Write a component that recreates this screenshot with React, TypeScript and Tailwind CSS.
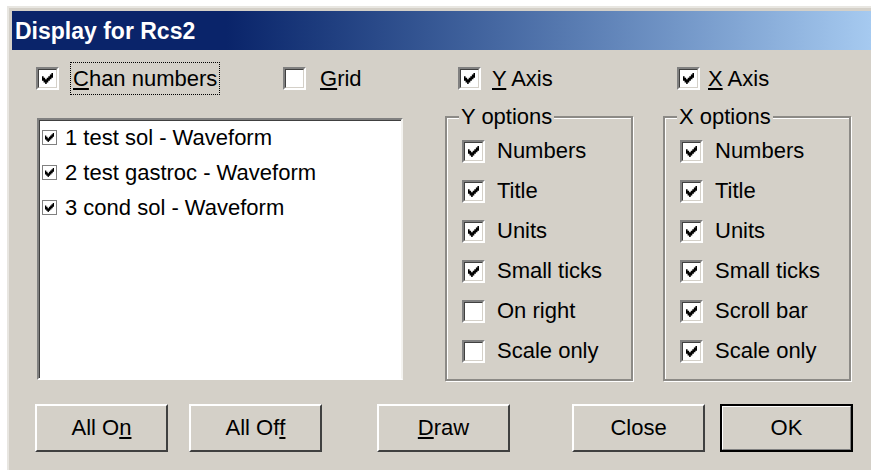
import React from 'react';

// Classic 7x7 pixel tick used by the old-style check boxes
function Tick({ className }: { className: string }) {
  return (
    <svg viewBox="0 0 7 7" className={className} fill="#000">
      <path d="M0 2H1V3H2V4H3V3H4V2H5V1H6V0H7V3H6V4H5V5H4V6H3V7H2V6H1V5H0Z" />
    </svg>
  );
}

function Box({ checked = true }: { checked?: boolean }) {
  return (
    <span className="flex h-[23px] w-[23px] shrink-0 border-2 border-t-[#808080] border-l-[#808080] border-b-white border-r-white">
      <span className="flex flex-1 items-center justify-center border border-t-[#404040] border-l-[#404040] border-b-[#d4d0c8] border-r-[#d4d0c8] bg-white">
        {checked && <Tick className="h-[11px] w-[11px]" />}
      </span>
    </span>
  );
}

function SmallBox() {
  return (
    <span className="flex h-[15px] w-[15px] shrink-0 items-center justify-center border border-[#808080] bg-white">
      <Tick className="h-[9px] w-[9px]" />
    </span>
  );
}

function Option({ label, checked = true }: { label: string; checked?: boolean }) {
  return (
    <div className="flex h-[40px] items-center gap-[12px]">
      <Box checked={checked} />
      <span>{label}</span>
    </div>
  );
}

function Group({ title, children }: { title: string; children: React.ReactNode }) {
  return (
    <fieldset className="h-[277px] w-[188px] border-2 border-[#8c8a86] shadow-[inset_1px_1px_0_#fff,1px_1px_0_#fff]">
      <legend className="ml-[12px] bg-[#d4d0c8] px-[2px] leading-[26px]">{title}</legend>
      <div className="pl-[15px] pt-[1px]">{children}</div>
    </fieldset>
  );
}

function Button({ children, className = '' }: { children: React.ReactNode; className?: string }) {
  return (
    <div
      className={`flex h-[48px] w-[133px] items-center justify-center border-2 border-t-white border-l-white border-b-[#404040] border-r-[#404040] ${className}`}
    >
      {children}
    </div>
  );
}

const traces = ['1 test sol - Waveform', '2 test gastroc - Waveform', '3 cond sol - Waveform'];

export default function App() {
  return (
    <div className="h-[470px] w-[871px] overflow-hidden bg-white pl-[7px] pt-[6px] font-['Liberation_Sans',Arial,sans-serif] text-[22px] leading-[26px] text-black">
      <div className="h-full border-l-2 border-t-2 border-[#e8e6e1] bg-[#d4d0c8] pl-[3px] pt-[3px]">
        {/* Caption */}
        <div className="flex h-[39px] items-center bg-linear-to-r from-[#0a246a] from-25% to-[#a6caf0] pl-[3px] text-[23px] font-bold text-white">
          Display for Rcs2
        </div>

        {/* Top row of toggles */}
        <div className="mt-[12px] flex h-[33px] items-center pl-[24px]">
          <div className="flex w-[247px] items-center">
            <Box />
            <span className="ml-[11px] flex h-[33px] items-center border border-dotted border-black px-[2px]">
              <u className="underline-offset-2">C</u>han numbers
            </span>
          </div>
          <div className="flex w-[175px] items-center">
            <Box checked={false} />
            <span className="ml-[14px]">
              <u className="underline-offset-2">G</u>rid
            </span>
          </div>
          <div className="flex w-[219px] items-center">
            <Box />
            <span className="ml-[11px]">
              <u className="underline-offset-2">Y</u> Axis
            </span>
          </div>
          <div className="flex items-center">
            <Box />
            <span className="ml-[8px]">
              <u className="underline-offset-2">X</u> Axis
            </span>
          </div>
        </div>

        {/* Trace list and axis groups */}
        <div className="mt-[9px] flex items-start pl-[25px]">
          <div className="mt-[14px] h-[262px] w-[366px] border-2 border-t-[#808080] border-l-[#808080] border-b-white border-r-[#f4f3f0] bg-white pl-[3px] shadow-[inset_1px_1px_0_#404040]">
            {traces.map((t) => (
              <div key={t} className="flex h-[35px] items-center gap-[8px]">
                <SmallBox />
                <span>{t}</span>
              </div>
            ))}
          </div>

          <div className="ml-[42px]">
            <Group title="Y options">
              <Option label="Numbers" />
              <Option label="Title" />
              <Option label="Units" />
              <Option label="Small ticks" />
              <Option label="On right" checked={false} />
              <Option label="Scale only" checked={false} />
            </Group>
          </div>

          <div className="ml-[30px]">
            <Group title="X options">
              <Option label="Numbers" />
              <Option label="Title" />
              <Option label="Units" />
              <Option label="Small ticks" />
              <Option label="Scroll bar" />
              <Option label="Scale only" />
            </Group>
          </div>
        </div>

        {/* Buttons */}
        <div className="mt-[23px] flex pl-[23px]">
          <Button>
            All O<u className="underline-offset-2">n</u>
          </Button>
          <Button className="ml-[21px]">
            All Of<u className="underline-offset-2">f</u>
          </Button>
          <Button className="ml-[55px]">
            <u className="underline-offset-2">D</u>raw
          </Button>
          <Button className="ml-[62px]">Close</Button>
          <div className="ml-[15px] flex h-[48px] w-[133px] border-2 border-black">
            <div className="flex flex-1 items-center justify-center border border-t-white border-l-white border-b-[#808080] border-r-[#808080]">
              OK
            </div>
          </div>
        </div>
      </div>
    </div>
  );
}
